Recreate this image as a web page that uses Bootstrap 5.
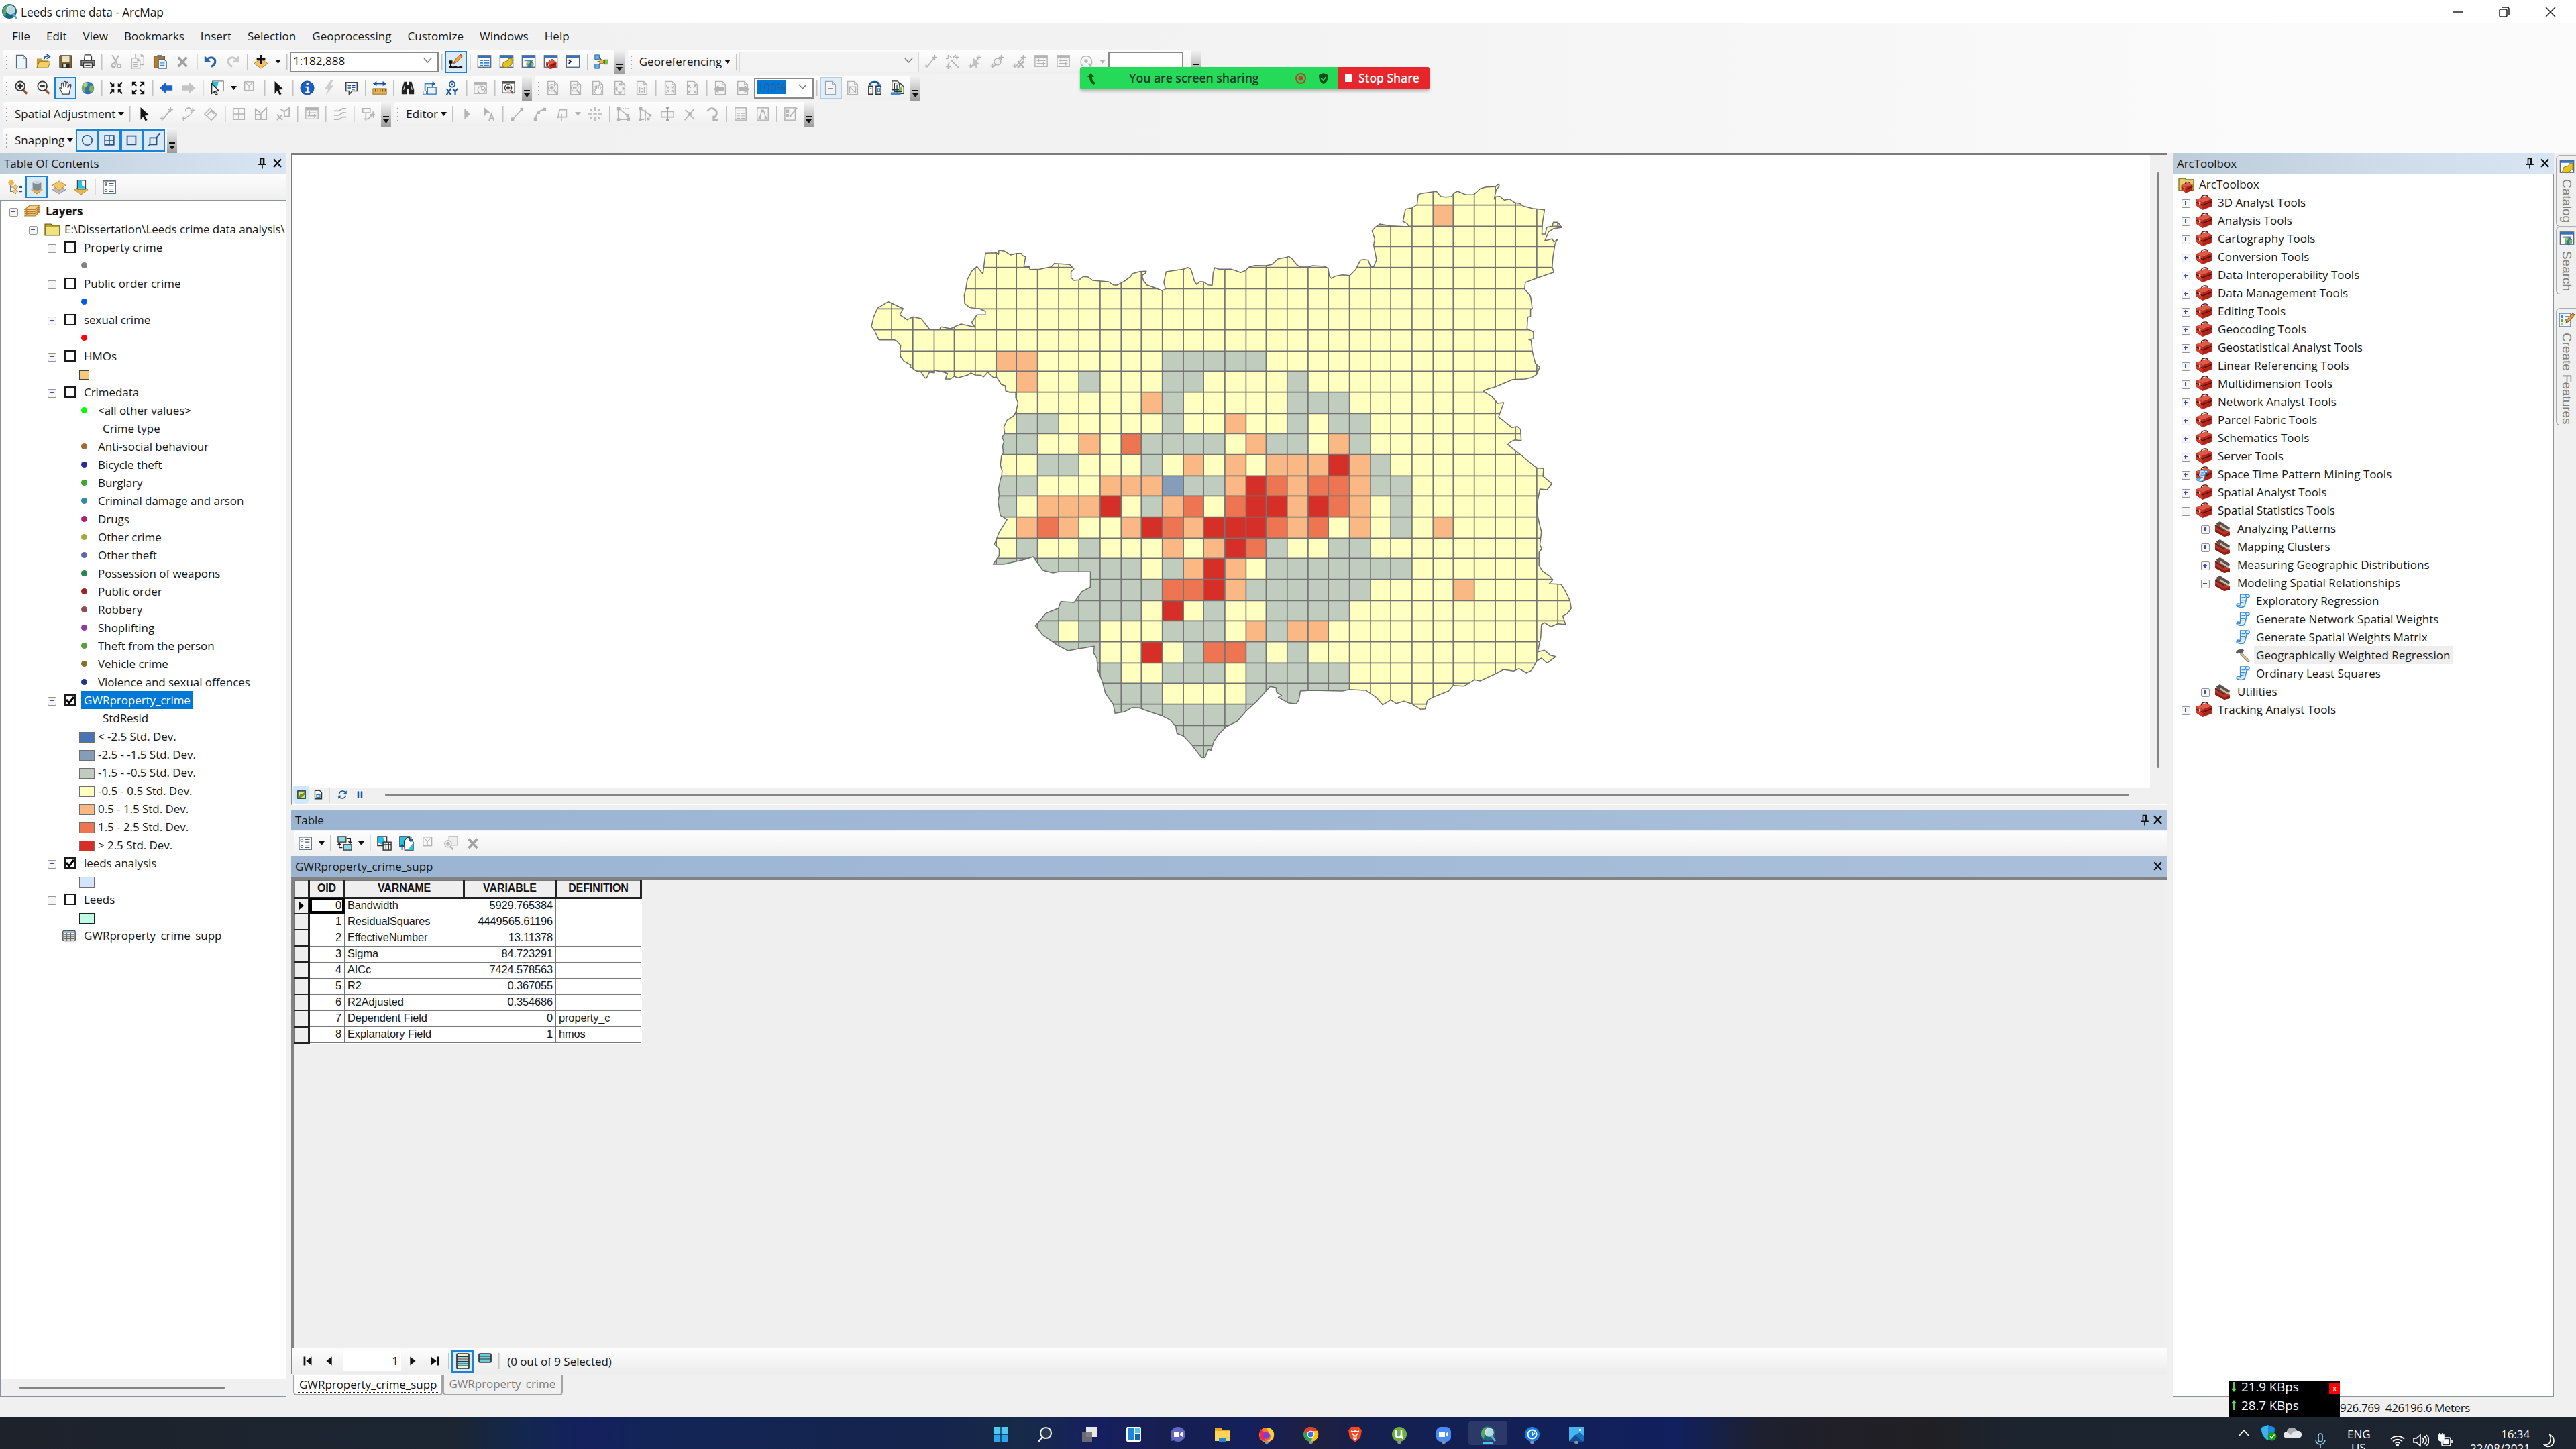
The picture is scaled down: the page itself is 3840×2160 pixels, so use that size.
<!DOCTYPE html>
<html lang="en">
<head>
<meta charset="utf-8">
<title>Leeds crime data - ArcMap</title>
<link href="https://cdn.jsdelivr.net/npm/bootstrap@5.3.0/dist/css/bootstrap.min.css" rel="stylesheet">
<style>
body{width:3840px;height:2160px;overflow:hidden;background:#f0f0f0;color:#141414;font:17px/27px "Open Sans","Noto Sans",sans-serif;letter-spacing:-.05px}
svg{display:block;flex:none}
.titlebar{height:35px;background:#fff;padding-left:2px}
.titlebar .caption{font-size:17.3px;margin:2px 0 0 5px}
.winbtns{width:187px;gap:47px}
.upper{background:linear-gradient(90deg,#f0f0f0 0,#f3f3f3 50%,#fbfbfb 90%);letter-spacing:.05px}
.menubar{height:37px;padding-left:18px;gap:24px}
.menubar span{display:block}
.bars{padding:2px 0 1px 5px;gap:3px;height:156px}
.barrow{height:36px;gap:5px}
.tbar{height:36px;background:linear-gradient(#fdfdfd,#f8f8f8 40%,#efefef);border-radius:3px 0 0 3px}
#tblbar{margin:1px 0 1px 4px}
.grip{width:10px;height:22px;background:radial-gradient(circle,#a9a9a9 1.3px,transparent 1.6px) 0 0/10px 6px}
.tbtn{width:33.1px;height:33px;display:flex;align-items:center;justify-content:center}
.tbtn.on{background:#dceaf7;border:2px solid #1883d7}
.tbtn.soft{background:#e3edf6;border:2px solid #b4cbe0}
.tsep{width:9px;height:24px;background:linear-gradient(#c3c3c3,#c3c3c3) 4px 0/1.5px 100% no-repeat}
.caret{width:17px;display:flex;justify-content:center}
.tlabel{padding:0 0 2px 7px;white-space:nowrap}
.combo{height:31px;border:2px solid #8a8a8a;background:#fff;padding:0 8px 3px 3px}
.combo.dim{border:1px solid #d9d9d9;background:#f3f3f3}
.combo .picked{background:#0078d7;color:#2c5f92;line-height:21px}
.more{width:15px;height:37px;align-self:flex-start;margin-left:3px;background:linear-gradient(#f4f4f4,#cfcfcf 45%,#9b9b9b);display:flex;align-items:flex-end;justify-content:center;padding-bottom:5px}
.workspace{height:1854px}
.pane-toc{width:427px}
.pane-mid{width:2796px;margin:0 9px 0 7px}
.pane-tools{width:568px}
.phead{height:31px;background:linear-gradient(90deg,#bccbd9,#cddbe8 50%,#d8e6f4);padding:0 3px 0 6px}
.phead.act{background:linear-gradient(90deg,#9ab4d2,#a4bbd7 60%,#aac0da)}
.phead.first{margin-top:7px}
.phead .xbtn{margin-left:3px}
.tocbar{height:39px;background:linear-gradient(#fdfdfd,#efefef);padding-left:5px}
.whitebox{background:#fff;border:1.5px solid #8c919c}
.hscroll{height:25px;background:#f0f0f0;padding-left:28px}
.hscroll div{width:306px;height:3px}
#toc{padding-top:2px}
#toolbox{padding-top:1px;letter-spacing:.03px}
.treerow{height:27px;white-space:nowrap}
.treerow>.slot{display:block;flex:none}
.tog{display:block;width:13px;height:13px;border:1.5px solid #959595;border-radius:2px;background:#f5f5f5;position:relative;margin-top:3px}
.tog::before{content:"";position:absolute;left:2px;top:4.2px;width:6px;height:1.6px;background:#3b4fa5}
.tog.plus::after{content:"";position:absolute;left:4.2px;top:2px;width:1.6px;height:6px;background:#3b4fa5}
.cbox{width:17px;height:17px;border:2px solid #1b1b1b;background:#fff}
.dot{width:9px;height:9px;border-radius:50%;margin-left:1px}
.patch{width:23px;height:16px;border:1.6px solid #6f6f6f;margin-top:2px}
.patch.sm{width:15px;height:14px;border-color:#444}
.patch.dk{border-color:#222}
.chosen{background:#0078d7;color:#fff;padding:0 3px 0 4px;margin-left:-4px;height:27px}
.hovered{background:#eee;padding:0 3px;margin-left:-3px}
.vline{background:#858585;border-radius:1px}
.vthumb{width:3px;height:888px;margin-top:26px}
.mapwin{height:946px;border-top:3px solid #7c7c7c;border-left:2.5px solid #7c7c7c}
.mapfoot{height:26px;border-left:2px solid #8b8b8b;border-bottom:1px solid #fff;padding:0 0 4px 1px}
.mapfoot .cur{width:24px;height:26px;background:#cde8ff}
.mapfoot .track{width:2600px;height:3px}
.grid-area{height:702px;border-top:5px solid #828282;border-left:5px solid #828282;background:#efefef}
.dtable{border-collapse:collapse;font:16.4px/20px "Liberation Sans",Arial,sans-serif;letter-spacing:-.1px;table-layout:fixed;width:516px;background:#fff}
.dtable td,.dtable th{height:24.07px;padding:0 4px 2px 4px;border:1.5px solid #777;white-space:nowrap;line-height:19px}
.dtable th{background:#efefef;height:25.5px;text-align:center;border-right:3px solid #222;border-bottom:3px solid #222;font-size:16px}
.dtable td:first-child{background:#efefef;border-right:3px solid #222;border-bottom:2.5px solid #222;padding:0}
.dtable td.cur{outline:4px solid #000;outline-offset:-4px}
.navbar2{height:39px;margin-bottom:2px;background:linear-gradient(#fdfdfd,#ececec);border-top:1px solid #ddd;border-left:2px solid #888;padding-left:12px}
.recno{width:87px;height:30px;margin-left:9px;padding-top:1px}
.sheets{padding-left:3px}
.sheet{height:30px;border:2px solid #a5a5a5;border-top:0;border-radius:0 0 5px 5px;line-height:22px;color:#7b7b7b;padding:2px 9px 2px 7px}
.sheet.open{background:#fff;color:#111;padding:2px 3px}
.sheet.open span{border:1.5px dotted #222;padding:0 3px;display:block}
.sidestrip{width:33px;padding:3px 0 0 3px}
.vtab{width:31px;border:1.5px solid #adadad;border-right:0;border-radius:6px 0 0 6px;background:#efefef;color:#808080;padding-top:5px;font:19px/22px "Liberation Sans",Arial,sans-serif}
.vtab span{writing-mode:vertical-rl;margin-top:7px}
.vt1{height:107px}.vt2{height:101px}.vt3{height:175px;margin-top:20px}
.status{height:30px;background:#f0f0f0;padding-left:3488px;line-height:34px;letter-spacing:-.42px}
.taskbar{height:48px;padding-left:1463px;background:linear-gradient(90deg,#1e222b 0,#1b2632 680px,#122750 780px,#14205f 880px,#122556 960px,#15244c 1400px,#172a48 1520px,#161f60 1640px,#171f50 1740px,#14205c 1860px,#1e2040 1960px,#142050 2050px,#11205e 2500px,#1d2030 2620px,#211f28 2740px,#202024 2880px,#1c2430 3000px,#1d2530 100%)}
.tile{width:58px;height:48px;margin-right:8px;position:relative;display:flex;align-items:center;justify-content:center;padding-top:3px}
.tile.cur::before{content:"";position:absolute;inset:7px 0 6px;background:rgba(255,255,255,.11);border-radius:4px}
.tile.run::after{content:"";position:absolute;bottom:8px;left:26px;width:6px;height:4px;border-radius:2px;background:#8f959f}
.tile.cur::after{content:"";position:absolute;bottom:7px;left:21px;width:16px;height:4px;border-radius:2px;background:#4cc2ff}
.tile svg{position:relative}
.share{position:absolute;left:1610px;top:100px;width:521px;height:33px;box-shadow:0 3px 4px rgba(0,0,0,.25);border-radius:3px;overflow:hidden;background:#25d959;font-weight:600;font-size:17.7px;color:#1e3a2c}
.share .msg{margin:0 53px 0 47px}
.share .stop{width:137px;background:#e8252b;color:#fff;font-size:17.5px}
.share .stop svg{margin:0 9px 0 11px}
.netspeed{position:absolute;left:3323px;top:2058px;width:165px;height:54px;background:#000;color:#fff;font-size:18.8px;padding-left:3px}
.netspeed .ln{height:18px;gap:7px}
.netspeed .ln+.ln{height:20px;margin-top:9px}
.netspeed .x{position:absolute;left:149px;top:4px;width:16px;height:16px;background:#f00;font:12px/15px "Open Sans",sans-serif;text-align:center}
.tray{position:absolute;left:3320px;top:2112px;width:520px;height:48px;overflow:hidden;color:#fff;font-size:17px}
.tray>*{position:absolute}
</style>
</head>
<body class="d-flex flex-column m-0">
<header class="titlebar d-flex align-items-center">
  <span data-i="arcmap" data-s="24"></span><span class="caption">Leeds crime data - ArcMap</span>
  <div class="winbtns d-flex align-items-center ms-auto">
    <svg width="22" height="22" viewBox="0 0 22 22" fill="none" stroke="#222" stroke-width="1.5"><path d="M4 11h14"/></svg>
    <svg width="22" height="22" viewBox="0 0 22 22" fill="none" stroke="#222" stroke-width="1.5"><rect x="4" y="7" width="11" height="11" rx="2"/><path d="M7 4h8a3 3 0 0 1 3 3v8"/></svg>
    <svg width="22" height="22" viewBox="0 0 22 22" fill="none" stroke="#222" stroke-width="1.5"><path d="M4 4l14 14M18 4L4 18"/></svg>
  </div>
</header>
<div class="upper">
  <nav class="menubar d-flex align-items-center"><span>File</span><span>Edit</span><span>View</span><span>Bookmarks</span><span>Insert</span><span>Selection</span><span>Geoprocessing</span><span>Customize</span><span>Windows</span><span>Help</span></nav>
  <div class="bars d-flex flex-column" id="bars"></div>
</div>
<main class="workspace d-flex">
  <aside class="pane-toc d-flex flex-column">
    <div class="phead d-flex align-items-center"><span>Table Of Contents</span><span class="ms-auto" data-i="pin" data-s="20"></span><span data-i="close" data-s="20" class="xbtn"></span></div>
    <div class="tocbar d-flex align-items-center" id="tocbar"></div>
    <div class="whitebox flex-grow-1 d-flex flex-column">
      <div id="toc" class="flex-grow-1 overflow-hidden"></div>
      <div class="hscroll d-flex align-items-center"><div class="vline"></div></div>
    </div>
  </aside>
  <section class="pane-mid d-flex flex-column">
    <div class="mapwin d-flex"><div class="bg-white"><svg id="map" width="2769" height="943" viewBox="436.5 231 2769 943"></svg></div>
      <div class="d-flex justify-content-center flex-grow-1"><div class="vline vthumb"></div></div></div>
    <div class="mapfoot d-flex align-items-center" id="mapfoot"></div>
    <div class="phead act first d-flex align-items-center"><span>Table</span><span class="ms-auto" data-i="pin" data-s="20"></span><span data-i="close" data-s="20"></span></div>
    <div class="tbar d-flex align-items-center" id="tblbar"></div>
    <div class="phead act d-flex align-items-center"><span>GWRproperty_crime_supp</span><span class="ms-auto" data-i="close" data-s="20"></span></div>
    <div class="grid-area">
      <table class="dtable"><colgroup><col style="width:21px"><col style="width:53px"><col style="width:178px"><col style="width:137px"><col style="width:127px"></colgroup>
      <thead><tr><th></th><th>OID</th><th>VARNAME</th><th>VARIABLE</th><th>DEFINITION</th></tr></thead><tbody id="rows"></tbody></table>
    </div>
    <div class="navbar2 d-flex align-items-center" id="recnav"></div>
    <div class="sheets d-flex"><div class="sheet open"><span>GWRproperty_crime_supp</span></div><div class="sheet">GWRproperty_crime</div></div>
  </section>
  <aside class="pane-tools d-flex flex-column">
    <div class="phead d-flex align-items-center"><span>ArcToolbox</span><span class="ms-auto" data-i="pin" data-s="20"></span><span data-i="close" data-s="20" class="xbtn"></span></div>
    <div class="whitebox flex-grow-1" id="toolbox"></div>
  </aside>
  <aside class="sidestrip">
    <div class="vtab vt1 d-flex flex-column align-items-center"><i data-i="catalog" data-s="23"></i><span>Catalog</span></div>
    <div class="vtab vt2 d-flex flex-column align-items-center"><i data-i="search" data-s="23"></i><span>Search</span></div>
    <div class="vtab vt3 d-flex flex-column align-items-center"><i data-i="create" data-s="24"></i><span>Create Features</span></div>
  </aside>
</main>
<div class="status">926.769&nbsp; 426196.6 Meters</div>
<footer class="taskbar d-flex" id="task"></footer>

<div class="share d-flex align-items-center">
  <svg class="ms-2" width="18" height="20" viewBox="0 0 18 20"><path d="M8 2l5 6h-3c0 4 1 6 5 8l-2 3C8 17 6 13 6 8H3z" fill="#075c14"/></svg>
  <span class="msg">You are screen sharing</span>
  <svg width="18" height="18" viewBox="0 0 18 18" fill="none" stroke="#b5432c" stroke-width="2"><circle cx="9" cy="9" r="7"/><circle cx="9" cy="9" r="2.5" fill="#b5432c"/></svg>
  <svg class="ms-3" width="18" height="18" viewBox="0 0 18 18"><path d="M9 1l7 3c0 7-2 11-7 13C4 15 2 11 2 4z" fill="#0b4f1c"/><path d="M5.500 9l3 3 4-5" fill="none" stroke="#25d959" stroke-width="1.800"/></svg>
  <div class="stop d-flex align-items-center h-100 ms-auto"><svg width="11" height="11"><rect width="11" height="11" fill="#fff"/></svg>Stop Share</div>
</div>
<div class="netspeed">
  <div class="ln d-flex align-items-center"><svg width="8" height="16" viewBox="0 0 8 16" fill="none" stroke="#5fe06d" stroke-width="1.800"><path d="M4 1v13M1 11l3 3.500 3-3.500"/></svg><span>21.9 KBps</span></div>
  <div class="ln d-flex align-items-center"><svg width="8" height="16" viewBox="0 0 8 16" fill="none" stroke="#5fe06d" stroke-width="1.800"><path d="M4 15V2M1 5l3-3.500 3 3.500"/></svg><span>28.7 KBps</span></div>
  <div class="x">x</div>
</div>
<div class="tray">
  <svg style="left:16px;top:18px" width="18" height="12" fill="none" stroke="#fff" stroke-width="1.600"><path d="M2 10l7-8 7 8"/></svg>
  <svg style="left:50px;top:12px" width="24" height="24" viewBox="0 0 24 24"><path d="M11 0l10 4c0 9-3 15-10 19C4 19 1 13 1 4z" fill="#1a8ae0"/><path d="M11 0v23C4 19 1 13 1 4z" fill="#3bb0f2"/><circle cx="17" cy="17" r="6.500" fill="#13a10e"/><path d="M14 17l2.500 2.500 4-5" fill="none" stroke="#fff" stroke-width="1.600"/></svg>
  <svg style="left:84px;top:15px" width="28" height="18" viewBox="0 0 28 18"><path d="M5 17a5 5 0 0 1 0-10A8 8 0 0 1 20 6a5.500 5.500 0 0 1 3 11z" fill="#e4e6ea"/><path d="M5 7a8 8 0 0 1 15-1c-5 0-8 4-9 6z" fill="#a9adb5"/></svg>
  <svg style="left:130px;top:24px" width="18" height="24" fill="none" stroke="#8fd3ee" stroke-width="1.600"><rect x="6" y="1" width="6" height="12" rx="3"/><path d="M2 10a7 7 0 0 0 14 0M9 17v6"/></svg>
  <span style="left:179px;top:12px">ENG</span><span style="left:185px;top:32px">US</span>
  <svg style="left:243px;top:26px" width="22" height="18" fill="none" stroke="#fff" stroke-width="1.700"><path d="M1 7a14 14 0 0 1 20 0M4 10.500a10 10 0 0 1 14 0M7.500 13.500a5 5 0 0 1 7 0"/><circle cx="11" cy="16" r="1.200" fill="#fff"/></svg>
  <svg style="left:277px;top:25px" width="24" height="20" fill="none" stroke="#fff" stroke-width="1.600"><path d="M1 7h4l6-5v16l-6-5H1zM14 6c2 2 2 6 0 8M17 4c4 3 4 9 0 12M20 2c5 4 5 12 0 16"/></svg>
  <svg style="left:313px;top:24px" width="24" height="22" fill="none" stroke="#fff" stroke-width="1.600"><rect x="7" y="7" width="13" height="12" rx="2"/><path d="M22 11v4"/><path d="M2 3h8v5a4 4 0 0 1-8 0zM4 0v3M8 0v3" fill="#fff"/><rect x="10" y="10" width="7" height="6" fill="#fff"/></svg>
  <span style="left:408px;top:12px">16:34</span><span style="left:362px;top:33px">22/08/2021</span>
  <svg style="left:471px;top:26px" width="20" height="20" fill="none" stroke="#fff" stroke-width="1.600"><path d="M10 1c8 3 8 14 0 17-3 1-6 0-8-2 8 1 11-8 8-15z"/></svg>
</div>
<script>
const G='#b4b4b4',B='#15559c';
const st=(c,d,w=1.8)=>`<path d="${d}" fill="none" stroke="${c}" stroke-width="${w}"/>`;
const fl=(c,d)=>`<path d="${d}" fill="${c}"/>`;
const win=(x='')=>`<rect x="1.500" y="2" width="21" height="19" fill="#fff" stroke="#58697a" stroke-width="1.500"/><path d="M1.500 2h21v4h-21z" fill="#3a72b8"/>${x}`;
const page=(c,x)=>`<path d="M4 1.500h11l5 5v16H4z" fill="#f4f4f4" stroke="${c}" stroke-width="1.600"/>${st(c,'M15 1.500v5h5',1.4)}${x}`;
const arrows4=(c,inw)=>inw?st(c,'M2 3l6 6M22 3l-6 6M2 21l6-6M22 21l-6-6',2)+fl(c,'M9 4v6H3zM15 4v6h6zM9 20v-6H3zM15 20v-6h6z'):st(c,'M4 4l5 5M20 4l-5 5M4 20l5-5M20 20l-5-5',2)+fl(c,'M2 2h7l-7 7zM22 2h-7l7 7zM2 22h7l-7-7zM22 22h-7l7-7z');
const mag=(c,s,x=10,y=9,f='#f2f2f2',h='#a0522d')=>`<path d="M${x+4} ${y+5}l7 7.500" stroke="${h}" stroke-width="3.600"/><circle cx="${x}" cy="${y}" r="7.500" fill="${f}" stroke="${c}" stroke-width="1.800"/>${st(c,s?`M${x-4} ${y}h8M${x} ${y-4}v8`:`M${x-4} ${y}h8`,2.6)}`;
const hand=(c)=>`<path d="M7 22c-1-4-5-7-5-10 1-1 3 0 4 2L5 5c0-2 2.500-2 3 0l1 6V3c0-2 3-2 3 0v8l1-7c0-2 3-2 3 0l-.5 8L18 7c.6-2 3-1 2.500 1l-2 9-1 5z" fill="#fff" stroke="${c}" stroke-width="1.500"/>`;
const link=(x='')=>st(G,'M6 21L18 6',2)+st(G,'M19 1v8M15 5h8M5 15v8M1 19h8',1.6)+x;
const box=x=>`<path d="M1 8l14-5 8 4v11l-13 5-9-6z" fill="#b42318"/><path d="M1 8l14-5 8 4-13 5z" fill="#de5b49"/><path d="M1 8l9 4v11l-9-6z" fill="#d03c2c"/>${st('#4a1712','M8 6c0-4 9-6 9-2M1 12l9 4 13-5',1.4)}${fl('#f0e6e0','M5 11l2 1v4l-2-1z')}${x||''}`;
const scroll='<path d="M8 2h11c4 0 4 5 0 5h-1l-3 12c-1 4-7 4-12 2-2-2 0-5 2-4h3z" fill="#d9efff" stroke="#3c8bd0" stroke-width="1.600"/>'+st('#3c8bd0','M10 7h6M9 11h6M8 15h5M18 2c-3 1-2 5 1 5M3 19c2 1 5 1 6-2',1.3);
const list='<rect x="2" y="2" width="20" height="20" fill="#fff" stroke="#65758c" stroke-width="1.800"/>'+st('#4a5a70','M11 6h8M11 10h8M11 15h8M11 19h8',1.3)+'<circle cx="6.500" cy="7" r="1.800" fill="none" stroke="#333" stroke-width="1.300"/><circle cx="6.500" cy="17" r="1.800" fill="none" stroke="#333" stroke-width="1.300"/>';
const globe='<circle cx="12" cy="12" r="10" fill="#2f6fc0"/><path d="M4 6c3-4 8-4 9-2l-2 5-4 3 1 4-2 3C2 15 1 10 4 6zM15 8l6 1c1 4 0 8-4 11l-3-5z" fill="#7fb742"/><circle cx="8" cy="7" r="3" fill="#fff" opacity=".35"/>';
const I={
arcmap:'<circle cx="12" cy="11" r="11" fill="#16697a"/><path d="M4 5c4-5 9-4 11-2l-3 6-5 4-1 6C1 15 1 9 4 5z" fill="#5aa469"/><circle cx="14" cy="9" r="6" fill="#cfe9f5" opacity=".85" stroke="#e9f3f7" stroke-width="1.500"/><path d="M17 14l6 8" stroke="#6aa5d8" stroke-width="3"/>',
pin:st('#111','M8 3h8M9 3v10M15 3v10M14 3v10M5 13.500h14M12 14v7',2),
close:st('#111','M5 4l13 14M18 4L5 18',2.8),
new:'<path d="M4 1.500h11l5 5v16H4z" fill="#eef6fd" stroke="#5a6a7c" stroke-width="1.600"/>'+st('#5a6a7c','M15 1.500v5h5',1.4),
open:'<path d="M1 7h8l2 3h9v12H1z" fill="#c79a35"/><path d="M5 12h18l-4 10H1z" fill="#f3cf6b" stroke="#8b6914"/>'+st(B,'M13 8c0-5 3-5 6-5M17 0l5 3.500L17 7',2),
save:'<rect x="2" y="2" width="20" height="20" rx="1" fill="#7a6432" stroke="#3a3223"/><rect x="6" y="3" width="12" height="9" fill="#e9e2c8"/><rect x="6" y="15" width="12" height="7" fill="#2b2a27"/><rect x="8" y="16" width="4" height="5" fill="#ddd"/>',
print:'<path d="M7 1h9l2 2v7H6z" fill="#fff" stroke="#333" stroke-width="1.400"/><path d="M1 10h22v8H1z" fill="#8c8c8c" stroke="#333" stroke-width="1.400"/><path d="M5 14h14v8H5z" fill="#fff" stroke="#333" stroke-width="1.400"/>'+st('#333','M8 18h8',1.5),
cut:st(G,'M6 1l8 15M16 2L9 15',2.4)+`<circle cx="8" cy="18" r="3" fill="none" stroke="${G}" stroke-width="2"/><circle cx="17" cy="19" r="3" fill="none" stroke="${G}" stroke-width="2"/>`,
copy:`<g transform="translate(4 -2) scale(.85)">${page(G,'')}</g><g transform="translate(-2 5) scale(.85)">${page(G,st(G,'M7 10h9M7 14h9M7 18h9',1.3))}</g>`,
paste:'<rect x="2" y="3" width="17" height="19" fill="#b87a2d" stroke="#6f4310"/><rect x="7" y="1" width="7" height="4" fill="#777"/><path d="M9 8h9l4 4v11H9z" fill="#eef6fd" stroke="#4f6e93" stroke-width="1.400"/>'+st('#4c83c0','M11 14h8M11 18h8',1.4),
del:st('#a2a2a2','M5 5l14 15M19 5L5 20',4),
undo:st('#2a64a8','M6 8c8-6 15-1 13 6-1 3-3 5-6 6',3.4)+fl('#2a64a8','M2 2v11h11z'),
redo:st('#cacaca','M18 8c-8-6-15-1-13 6 1 3 3 5 6 6',3.4)+fl('#cacaca','M22 2v11H11z'),
add:'<path d="M12 7l11 8-11 8L1 15z" fill="#f4c46a" stroke="#b5822a"/>'+st('#111','M12 1v15M5 8h14',4),
draw:st('#111','M3 12v9h18',1.6)+fl('#111','M1 10h5v5H1zM1 19h5v4H1zM8 19h5v4H8zM17 19h5v4h-5z')+'<path d="M8 15l3-7 8-8 3 3-8 9z" fill="#f0a43a" stroke="#7a4a10"/><path d="M18 1l3-1 2 3-2 2z" fill="#d9534f"/>',
toc:win(st('#3a85d8','M5 10h5M5 14h5M5 18h5M12 10h8M12 14h8M12 18h8',1.8)),
catalog:win('<path d="M7 13l8-3v-3h6v9l-9 6-7-2z" fill="#e5c320" stroke="#8b7410"/>'),
search:win(st('#6a8ab0','M5 10h14',2.4)+'<g transform="translate(7 9) scale(.6)">'+globe+'</g>'),
tools:win('<g transform="translate(4 7) scale(.75)">'+box()+'</g>'),
python:win(st('#111','M5 9l4 3-4 3',1.8)),
model:st('#444','M6 5h4l3 7H6M13 12l4 0M6 19l6-6',1.6)+'<rect x="2" y="1" width="7" height="7" fill="#61b5f0" stroke="#215e94"/><rect x="2" y="16" width="7" height="7" fill="#61b5f0" stroke="#215e94"/><circle cx="13" cy="12" r="3.500" fill="#f4b042" stroke="#9a650b"/><rect x="18" y="9" width="6" height="7" fill="#77c34a" stroke="#34761a"/>',
zin:mag('#333',1),zout:mag('#333',0),hand:hand('#444'),globe,
fin:arrows4('#111',1),fout:arrows4('#111',0),
back:fl('#1d63c4','M1 12l10-9v5h11v8H11v5z'),fwd:fl('#c3c3c3','M23 12L13 3v5H2v8h11v5z'),
selfeat:'<rect x="5" y="1" width="18" height="16" fill="#fff" stroke="#556"/><path d="M6 2h9l-2 8-7 6z" fill="#1fc4e6"/><path d="M4 5l11 11-5 1 3 5-3 1-2-5-4 3z" fill="#fff" stroke="#222" stroke-width="1.400"/>',
clear:`<rect x="3" y="2" width="14" height="14" fill="#fafafa" stroke="${G}" stroke-width="1.600"/>`+st(G,'M5 4l5 5 5-5M10 9v6',1.3),
ptr:fl('#151515','M6 1l14 13-7 .8 4 7-3 1.700-4-7-4 5z'),
ident:'<circle cx="12" cy="12" r="11" fill="#1d5fc0" stroke="#123f85"/>'+fl('#fff','M10.500 4h3.500v3.500h-3.500zM9 9.500h5V18h2v2H9v-2h2v-6.500H9z'),
bolt:fl('#cdcdcd','M14 0L4 14h6l-4 10L19 8h-6l5-8z'),
popup:'<path d="M3 3h18v14h-8l-5 6v-6H3z" fill="#fff" stroke="#444" stroke-width="1.600"/>'+st(B,'M6 8h5M6 12h5M13 8h5M13 11h5M13 14h4',1.8),
ruler:st(B,'M3 5h18',2)+fl(B,'M1 5l6-4v8zM23 5l-6-4v8z')+'<rect x="1" y="13" width="22" height="9" fill="#e3b45c" stroke="#9a6a1d"/>'+st('#7a5314','M5 14v4M9 14v4M13 14v4M17 14v4M21 14v4',1.2),
binoc:fl('#222','M6 2h4v5h4V2h4l4 13v7h-8v-8h-4v8H2v-7z')+st('#ccc','M7 8l-2 7M17 8l2 7',1.4),
route:st('#3a85c8','M4 19V5h12v6',2)+fl(B,'M16 1l5 4-5 4z')+'<rect x="8" y="11" width="14" height="11" fill="#e8f2fb" stroke="#3a75b0" stroke-width="1.400"/><rect x="1" y="17" width="5" height="5" fill="#fff" stroke="#3a75b0"/>',
xy:'<circle cx="12" cy="6" r="4.500" fill="none" stroke="#15559c" stroke-width="1.800"/><circle cx="12" cy="6" r="1.500" fill="#15559c"/>'+st(B,'M3 13l7 10M10 13L3 23M13 13l4 5 4-5M17 18v5',2.2),
time:`<rect x="2" y="3" width="20" height="18" fill="#f2f2f2" stroke="${G}" stroke-width="1.500"/><path d="M2 3h20v4H2z" fill="${G}"/><circle cx="14" cy="15" r="6" fill="#f5f5f5" stroke="${G}" stroke-width="1.500"/>`+st(G,'M14 11v4h4',1.4),
viewer:'<rect x="2" y="2" width="20" height="18" fill="#fff" stroke="#444" stroke-width="1.600"/><path d="M2 2h20v3H2z" fill="#555"/><g transform="translate(4 5) scale(.75)">'+mag('#333',1)+'</g>',
lzin:page(G,'<g transform="translate(3 5) scale(.75)">'+mag(G,1,10,9,'#eee',G)+'</g>'),lzout:page(G,'<g transform="translate(3 5) scale(.75)">'+mag(G,0,10,9,'#eee',G)+'</g>'),
lhand:page(G,'<g transform="translate(4 6) scale(.75)">'+hand(G)+'</g>'),
lfull:page(G,fl(G,'M12 4l4 4H8zM12 22l4-4H8zM4 13l4-4v8zM20 13l-4-4v8z')),
l11:page(G,st(G,'M8 10v10M16 10v10M12 12v2M12 17v2',2)),
lin:page(G,'<g transform="translate(4 6) scale(.66)">'+arrows4(G,1)+'</g>'),lout:page(G,'<g transform="translate(4 6) scale(.66)">'+arrows4(G,0)+'</g>'),
lback:page(G,fl(G,'M1 14l8-7v4h9v6H9v4z')),lfwd:page(G,fl(G,'M23 14l-8-7v4H6v6h9v4z')),
draft:page('#9aa7b4',st('#8a97a4','M8 13h8',2)),focus:page(G,st(G,'M7 10h10v10H7zM7 10l10 10',1.4)),
change:'<path d="M2 9h7v13H2zM14 9h8v13h-8z" fill="#fff" stroke="#333" stroke-width="1.600"/>'+st(B,'M4 7c1-6 13-6 15-1',3)+fl(B,'M15 6h8l-4 5z')+st('#3a85c8','M4 13h3M4 17h3M17 13h3v5h-3z',1.4),
ddp:'<path d="M3 1h9l3 3v11H3zM7 4h9l3 3v11H7zM11 7h8l3 3v11H11z" fill="#fff" stroke="#333" stroke-width="1.400"/><rect x="14" y="11" width="5" height="6" fill="#77b94a"/><rect x="1" y="19" width="16" height="4" fill="#3c8bd0"/>',
link:link(),link2:st(G,'M7 20C8 14 18 16 17 8M4 16v7M1 19h7M19 2v8M15 6h8M8 8c-3-6 6-8 8-3',1.7),link3:st(G,'M2 12l9-9 11 10-9 9zM6 14l7-7 5 5',1.7),
g1:link(fl('#c6c6c6','M10 8l6-5 6 6-6 5z')),g2:link(fl('#c2c2c2','M10 6l10 10-5 1 2 5-3 1-2-5-3 3z')),g3:link('<circle cx="13" cy="12" r="5.500" fill="#eee" stroke="#b4b4b4" stroke-width="1.700"/>'),g4:link(st(G,'M10 11l10 11M20 11L10 22',3)),
gw:`<rect x="2" y="2" width="20" height="18" fill="#f5f5f5" stroke="${G}" stroke-width="1.500"/><path d="M2 2h20v4H2z" fill="${G}"/>`+st(G,'M5 10h14M5 15h14M8 7v6M16 12v6',1.6),
rot:st(G,'M17 20c8-6 4-17-5-17C2 3 1 16 8 20M12 8v6M9 11h6',1.7)+fl(G,'M14 15h7v7z'),
wand:st(G,'M9 9l13 13M5 1v5M1 7h4M13 5l4-4M6 12v4M10 6l-2-3M1 20h8M5 16v8M19 2v6M16 5h7',2),
tgrid:st(G,'M3 3h18v18H3zM12 3v18M3 12h18',1.8),tpoly:st(G,'M3 4l9 7 9-9v19H3zM3 13h9M12 11v10',1.8),tpolyx:st(G,'M8 4l6 4 8-6v14h-8M14 8v8M2 13l9 9M11 13l-9 9',2),
lines:st(G,'M2 7h8l6-4h6M2 14h8l6-4h6M2 21h8l6-4h6',1.8),ptree:st(G,'M3 3h12v7H3zM8 10v13M5 20h7l8-9M20 8v10M15 13h8',1.8),
edarrow:fl(G,'M8 3l9 9-9 9z'),edta:fl(G,'M4 1l11 10H8l-4 5z')+st(G,'M12 23l4-11 4 11M13 19h6',2),
seg:st(G,'M4 21L20 4',1.8)+fl(G,'M2 18h5v5H2zM17 2h5v5h-5z'),arc:st(G,'M6 21C6 10 12 6 20 5',1.8)+fl(G,'M3 18h5v5H3zM9 8h4v4H9zM18 2h5v5h-5z'),
trace:st(G,'M6 19L9 5h11v12H6M12 12v11M7 17h10',1.8),burst:st(G,'M12 1v6M12 17v6M1 12h6M17 12h6M4 4l4 4M20 4l-4 4M4 20l4-4M20 20l-4-4M9 12h6',1.8),
vtx:st(G,'M4 3v18h17v-5L6 4',1.8)+fl(G,'M2 1h5v5H2zM2 19h5v5H2zM18 18h5v5h-5zM17 12h5v5h-5z')+`<path d="M7 3h14v9" fill="none" stroke="${G}" stroke-dasharray="2 2"/>`,
vtx2:st(G,'M4 3v18h6M4 3l15 10M12 5v18',1.8)+fl(G,'M2 1h5v5H2zM18 12h4v4h-4zM2 19h4v4H2zM15 18h4v4h-4z'),
split:st(G,'M2 8h20v9H2z',1.8)+st('#9a9a9a','M12 1v22',2)+fl('#9a9a9a','M10 0h4v4h-4zM10 20h4v4h-4z'),inter:st(G,'M4 22L20 3M5 5l4 4M14 15l6 6',1.8)+fl(G,'M10 9h5v6h-5z'),
rot2:st(G,'M5 8c3-8 15-6 15 3 0 4-3 6-5 8M15 15v7h7',3),
attr:`<rect x="3" y="2" width="18" height="20" fill="#f7f7f7" stroke="${G}" stroke-width="1.600"/>`+st(G,'M5 7h6M13 7h6M5 11h6M13 11h6M5 15h6M13 15h6M5 19h6M13 19h6',1.3),
sketch:`<rect x="3" y="2" width="18" height="20" fill="#f7f7f7" stroke="${G}" stroke-width="1.600"/>`+st(G,'M7 18l3-10h4l3 10',1.600)+fl(G,'M9 5h5v4H9zM5 16h4v4H5zM15 16h4v4h-4z'),
feat:`<rect x="2" y="2" width="17" height="20" fill="#f7f7f7" stroke="${G}" stroke-width="1.600"/>`+st(G,'M5 6h3v3H5zM5 13h3v3H5zM22 2L12 14l-1 3',2),
s1:'<circle cx="12" cy="12" r="8" fill="none" stroke="#26507e" stroke-width="1.700"/>',s2:st('#26507e','M4.500 4.500h15v15h-15zM12 4.500v15M4.500 12h15',1.7),s3:st('#26507e','M5 5h14v14H5z',1.900),s4:st('#26507e','M6 8h11v11H6zM2 22l4-3M17 8c1-3 2-5 5-6',1.8),
layers:['M3 17l7-6h14l-6 6z','M3 14l7-6h14l-6 6z','M3 11l7-6h14l-6 6z','M3 8l7-6h14l-6 6z'].map(d=>`<path d="${d}" transform="translate(-2 2)" fill="#f5cf8f" stroke="#b9802f" stroke-width="1.200"/>`).join(''),
folder:'<path d="M1 4h9l2 2h11v15H1z" fill="#b9a137" stroke="#6d5d14" stroke-width="1.200"/><path d="M2 9h20v11H2z" fill="#f1e27e"/>',
table:'<rect x="1" y="3" width="22" height="18" rx="2" fill="#fff" stroke="#555" stroke-width="1.800"/><path d="M2 4h20v3H2z" fill="#7fa9cf"/>'+st('#666','M2 10.500h20M2 14h20M2 17.500h20M8 7v14M15 7v14',1.3),
toolroot:'<path d="M1 3h9l2 2h11v16H1z" fill="#e2cf6a" stroke="#7d6a18" stroke-width="1.300"/><g transform="translate(4 7) scale(.76)">'+box()+'</g>',
box:box(),boxs:box('<g transform="translate(0 5) scale(.78)">'+scroll+'</g>'),
toolset:'<path d="M1 8l3-2 18 11v5l-8 2L1 14z" fill="#bb3326"/><path d="M1 13l13 8 8-3v4l-8 2L1 17z" fill="#8d1e14"/><path d="M2 5l6-3 14 9-1 4-5 1z" fill="#5b524c"/>'+st('#c9bca9','M8 8l13 8',2.4)+st('#3a302b','M1 8l13 8',1.600),
scroll,hammer:'<path d="M10 8l12 12-2 3L8 11z" fill="#d8c49e" stroke="#8b7a58"/><path d="M1 8c1-4 6-6 11-5l2 2-5 6-3-3-3 2z" fill="#5a5f63"/>',
t1:fl('#f0b44e','M1 5l3-4h5l2 4-2 4H4z')+st('#777','M5 9v10h5M5 12h8',1.3)+'<path d="M13 8l4 4-4 3-4-3zM13 15l4 4-4 4-4-4z" fill="#f6cd80" stroke="#c58a2c"/>'+st(B,'M19 12h5M19 19h5',2),
t2:'<path d="M12 10l9 6-9 7-9-7z" fill="#f0b64e" stroke="#b5822a"/><path d="M5 4h14v11c-3 3-11 3-14 0z" fill="#7f8b98"/><ellipse cx="12" cy="4" rx="7" ry="2.500" fill="#cfd6dd"/>',
t3:'<path d="M12 9l11 7-11 7-11-7z" fill="#bdbdbd" stroke="#8e8e8e"/><path d="M12 2l11 7-11 8L1 9z" fill="#f6c569" stroke="#b5822a"/>',
t4:'<path d="M12 9l11 7-11 8L1 16z" fill="#f0b64e" stroke="#b5822a"/><rect x="6" y="1" width="13" height="14" fill="#fff" stroke="#444" stroke-width="1.500"/><path d="M7 2h6v7l5 3v2H7z" fill="#1fc4e6"/>',list,
mapv:'<rect x="3" y="3" width="18" height="18" fill="#d9e27a" stroke="#333" stroke-width="2.400"/>'+fl('#5a9a3a','M5 19l4-9 6 0 4-5v7l-8 7z'),layv:'<path d="M4 2h11l5 5v15H4z" fill="#fff" stroke="#333" stroke-width="2.200"/>'+st('#3a75b0','M8 12h8v6H8z',2),
refresh:st(B,'M4 10c2-8 12-9 16-3M20 14c-2 8-12 9-16 3',2.600)+fl(B,'M22 2v8h-8zM2 22v-8h8z'),pause:fl(B,'M6 4h4v16H6zM14 4h4v16h-4z'),
rel:'<rect x="1" y="1" width="13" height="9" fill="#8edbe6" stroke="#333" stroke-width="1.400"/><rect x="10" y="14" width="13" height="9" fill="#8edbe6" stroke="#333" stroke-width="1.400"/>'+st('#222','M16 4h5v7M18 9l3 3 3-3M8 19H3v-6M0 15l3-3 3 3',1.700),
selattr:'<rect x="1" y="1" width="15" height="15" fill="#fff" stroke="#333" stroke-width="1.400"/><path d="M2 2h8l4 9-4 4-8-4z" fill="#1fc4e6"/><rect x="10" y="10" width="13" height="13" fill="#eee" stroke="#333" stroke-width="1.500"/>'+st('#333','M10 14h13M10 18h13M14.500 12v11M19 12v11',1.200),
switch:'<rect x="1" y="1" width="16" height="16" fill="#1fc4e6" stroke="#333" stroke-width="1.400"/><path d="M8 8l6-6 9 8v13H9z" fill="#fff" stroke="#333" stroke-width="1.300"/><path d="M14 23l9-12v12z" fill="#1fc4e6"/>'+st(B,'M19 1v7M16 5l3 4 3-4M5 23v-8M2 18l3-4 3 4',2),
zsel:`<rect x="9" y="1" width="14" height="14" fill="#eee" stroke="${G}" stroke-width="1.500"/><g transform="translate(0 6) scale(.75)">`+mag(G,1,10,9,'#eee',G)+'</g>',
tfull:'<rect x="3" y="1" width="18" height="22" rx="1.500" fill="#8edbe6" stroke="#333" stroke-width="1.700"/>'+fl('#f5f0d8','M4 2h16v3H4zM4 8h16v3H4zM4 19h16v3H4z')+st('#333','M3 5.500h18M3 9h18M3 12.500h18M3 16h18M3 19h18',1.200),
tsel:'<rect x="3" y="1" width="18" height="13" rx="1.500" fill="#6fcbd9" stroke="#333" stroke-width="1.700"/>'+st('#333','M3 5h18M3 9h18',1.200),
create:'<rect x="1" y="2" width="17" height="20" fill="#eef6fd" stroke="#4f7ba8" stroke-width="1.400"/>'+fl('#3a85c8','M3 5h4v4H3z')+fl('#5aa640','M3 11h4v4H3z')+fl('#d9b52a','M3 17h4v3H3z')+st('#666','M9 7h7M9 12h4',1.400)+'<path d="M11 16l2-5 8-9 3 2-8 10z" fill="#f0a43a" stroke="#7a4a10"/>',
first:fl('#111','M5 5h3v14H5zM18 5v14l-9-7z'),prev:fl('#111','M16 5v14l-9-7z'),next:fl('#111','M8 5v14l9-7z'),last:fl('#111','M16 5h3v14h-3zM6 5v14l9-7z'),
win:fl('#4cc9f5','M1 1h10.300v10.300H1zM12.700 1H23v10.300H12.700z')+fl('#2ba5ec','M1 12.700h10.300V23H1zM12.700 12.700H23V23H12.700z'),
tsearch:'<circle cx="13" cy="10" r="8" fill="#2b3a4e" stroke="#eee" stroke-width="2.200"/>'+st('#eee','M8 16l-6 7',2.600),
tview:fl('#e8e8ea','M7 1h16v15H7z')+'<rect x="1" y="9" width="15" height="14" fill="#707278" opacity=".9"/>',
widgets:'<rect x="1" y="1" width="22" height="22" rx="2" fill="#fff"/>'+fl('#1f87d8','M3 3h9v18H3z')+fl('#57c3f2','M14 3h7v7h-7z')+fl('#1665b0','M14 12h7v9h-7z'),
chat:'<circle cx="12" cy="12" r="11" fill="#6467c2"/><path d="M2 22l1-8 6 6z" fill="#6467c2"/>'+fl('#fff','M6 8h8v8H6zM15 11l4-3v8l-4-3z'),
explorer:'<path d="M1 2h9l2 3h11v17H1z" fill="#f0a91c"/><path d="M1 7h22v15H1z" fill="#ffd35c"/><path d="M7 17h11v6H7z" fill="#2a86cf"/>',
firefox:'<circle cx="12" cy="13" r="11" fill="#ff7a2b"/><path d="M12 2c7 0 12 5 11 12s-8 11-14 8c10 1 12-8 6-13z" fill="#ffd23d"/><path d="M3 4l4 4 5 0-3 5c-3 5 2 9 6 6-5 6-14 1-13-6z" fill="#f0284f"/><circle cx="12" cy="14" r="5" fill="#7542d8"/>',
chrome:'<circle cx="12" cy="12" r="11" fill="#32a350"/><path d="M12 1a11 11 0 0 1 10 6H12L6 13 2.500 6A11 11 0 0 1 12 1z" fill="#e33b2e"/><path d="M22 7a11 11 0 0 1-10.500 16L17 13l-1-6z" fill="#fbc116"/><circle cx="12" cy="12" r="5.500" fill="#fff"/><circle cx="12" cy="12" r="4.200" fill="#3878e0"/>',
brave:'<path d="M6 1h12l4 5-2 11-8 7-8-7L2 6z" fill="#f4471f"/>'+st('#fff','M6 7l3 1 3-1 3 1 3-1M8 11l3 3-1 4 2 2 2-2-1-4 3-3',1.800),
utor:'<circle cx="12" cy="12" r="11" fill="#6eae45"/>'+st('#fff','M7 6v7c0 5 7 5 8 0V6M15 12c0 4 1 6 3 6',2.600),
zoom:'<rect x="1" y="1" width="22" height="22" rx="7" fill="#4a8cf7"/>'+fl('#fff','M5 8h9v8H5zM15 11l4-3v8l-4-3z'),
timer:'<circle cx="12" cy="12" r="11" fill="#1b7fdc"/><circle cx="12" cy="12" r="6.500" fill="none" stroke="#fff" stroke-width="2"/>'+st('#fff','M12 8v5l4-3',1.900),
photos:'<rect x="1" y="1" width="22" height="22" rx="2" fill="#1a6fc0"/><path d="M1 1h22v13l-6-5-7 4-9 9z" fill="#45b4f0"/><path d="M1 23l9-10 12 10z" fill="#104e94"/><rect x="16" y="4" width="3" height="3" fill="#fff"/>'
};
const svg=(n,s=24)=>`<svg width="${s}" height="${s}" viewBox="0 0 24 24">${I[n]||''}</svg>`;
const car=(c='#111')=>`<span class="caret"><svg width="9" height="6"><path d="M0 0h9L4.500 6z" fill="${c}"/></svg></span>`;
const more='<div class="more"><svg width="9" height="11"><path d="M0 0h9v2H0zM0 5h9L4.500 11z" fill="#111"/></svg></div>';
const chev='<svg class="ms-auto" width="13" height="9" fill="none" stroke="#777" stroke-width="1.500"><path d="M1 1l5.500 6L12 1"/></svg>';
// Toolbar tokens: | separator, v caret, * framed button, ~ softly framed button, = label, # raw markup
const tool=t=>t==='|'?'<i class="tsep"></i>':t==='v'?car():t==='V'?car(G):t[0]==='='?`<span class="tlabel">${t.slice(1)}</span>`:t[0]==='#'?t.slice(1):t[0]==='*'?`<i class="tbtn on">${svg(t.slice(1),22)}</i>`:t[0]==='~'?`<i class="tbtn soft">${svg(t.slice(1),22)}</i>`:`<i class="tbtn">${svg(t,22)}</i>`;
const bar=a=>`<div class="tbar d-flex align-items-center"><i class="grip"></i>${a.map(tool).join('')}${more}</div>`;
const cb=(w,t,c='')=>`#<div class="combo ${c} d-flex align-items-center" style="width:${w}px">${t}${chev}</div>`;
const bars=[
 [['new','open','save','print','|','cut','copy','paste','del','|','undo','redo','|','add','v','|',cb(222,'1:182,888'),'|','*draw','|','toc','catalog','search','tools','python','|','model'],
  ['=Georeferencing','v','|',cb(268,'','dim'),'link','wand','g2','g3','g4','gw','gw','rot','V','#<div class="combo me-2" style="width:112px"></div>']],
 [['zin','zout','*hand','globe','|','fin','fout','|','back','fwd','|','selfeat','v','clear','|','ptr','|','ident','bolt','popup','|','ruler','|','binoc','route','xy','|','time','|','viewer'],
  ['lzin','lzout','lhand','lfull','l11','|','lin','lout','|','lback','lfwd',cb(89,'<span class="picked">100%</span>'),'|','~draft','focus','change','ddp']],
 [['=Spatial Adjustment','v','|','ptr','link','link2','link3','|','tgrid','tpoly','tpolyx','|','gw','|','lines','|','ptree'],
  ['=Editor','v','|','edarrow','edta','|','seg','arc','trace','V','burst','|','vtx','vtx2','split','inter','rot2','|','attr','sketch','|','feat']],
 [['=Snapping','v','*s1','*s2','*s3','*s4']]];
const $=i=>document.getElementById(i);
$('bars').innerHTML=bars.map(r=>`<div class="barrow d-flex">${r.map(bar).join('')}</div>`).join('');
$('tocbar').innerHTML=['t1','*t2','t3','t4','|','list'].map(tool).join('');
$('tblbar').innerHTML=['list','v','|','rel','v','|','selattr','switch','clear','zsel','del'].map(tool).join('');
$('mapfoot').innerHTML=`<i class="cur d-flex justify-content-center align-items-center rounded-bottom">${svg('mapv',15)}</i><i style="margin:0 4px 0 6px">${svg('layv',15)}</i><i class="tsep"></i><i class="ms-2">${svg('refresh',15)}</i><i style="margin:0 30px 0 11px">${svg('pause',15)}</i><i class="vline track"></i>`;
$('recnav').innerHTML=`<i>${svg('first',22)}</i><i style="margin-left:10px">${svg('prev',22)}</i><span class="recno bg-white text-end pe-1">1</span><i style="margin-left:6px">${svg('next',22)}</i><i style="margin:0 5px 0 11px">${svg('last',22)}</i><i class="tsep"></i><i class="tbtn on">${svg('tfull',24)}</i><i class="tbtn">${svg('tsel',24)}</i><i class="tsep"></i><span class="ms-1 ps-1">(0 out of 9 Selected)</span>`;
document.querySelectorAll('[data-i]').forEach(e=>e.innerHTML=svg(e.dataset.i,+e.dataset.s));

// Table of contents
const R=(pl,h)=>`<div class="treerow d-flex align-items-center" style="padding-left:${pl}px">${h}</div>`;
const cell=(w,h)=>`<span class="slot" style="width:${w}px">${h}</span>`;
const tog=p=>`<i class="tog ${p||''}"></i>`;
const lyr=(n,on,c)=>R(70,cell(25,tog())+cell(29,`<div class="cbox">${on?'<svg width="13" height="13"><path d="M1 6l4 5 7-9" fill="none" stroke="#000" stroke-width="3"/></svg>':''}</div>`)+`<span class="${c||''}">${n}</span>`);
const dot=(c,n='')=>R(119,cell(26,`<div class="dot" style="background:${c}"></div>`)+n);
const pat=(c,n='',x='')=>R(117,cell(28,`<div class="patch ${x}" style="background:${c}"></div>`)+n);
$('toc').innerHTML=[R(13,cell(22,tog())+cell(32,svg('layers',25))+'<b>Layers</b>'),R(42,cell(23,tog())+cell(30,svg('folder',24))+'E:\\Dissertation\\Leeds crime data analysis\\'),
lyr('Property crime'),dot('#828282'),lyr('Public order crime'),dot('#005ce6'),lyr('sexual crime'),dot('#f00'),lyr('HMOs'),pat('#f5ca7a','','sm'),
lyr('Crimedata'),dot('#0f0','&lt;all other values&gt;'),R(152,'Crime type'),
...[['#a0693c','Anti-social behaviour'],['#2a2aa3','Bicycle theft'],['#38a830','Burglary'],['#2f8ca3','Criminal damage and arson'],['#a8247c','Drugs'],['#a3a838','Other crime'],['#5c66b5','Other theft'],['#258750','Possession of weapons'],['#9e2420','Public order'],['#8f4a5c','Robbery'],['#8c3ca3','Shoplifting'],['#5c9e38','Theft from the person'],['#857029','Vehicle crime'],['#1f3585','Violence and sexual offences']].map(a=>dot(...a)),
lyr('GWRproperty_crime',1,'chosen'),R(152,'StdResid'),
...[['#4575b5','&lt; -2.5 Std. Dev.'],['#849eba','-2.5 - -1.5 Std. Dev.'],['#c0ccbe','-1.5 - -0.5 Std. Dev.'],['#ffffbf','-0.5 - 0.5 Std. Dev.'],['#fab984','0.5 - 1.5 Std. Dev.'],['#ed7551','1.5 - 2.5 Std. Dev.'],['#d62f27','&gt; 2.5 Std. Dev.']].map(a=>pat(...a)),
lyr('leeds analysis',1),pat('#d3e5fa'),lyr('Leeds'),pat('#beffe8','','dk'),R(92,cell(32,svg('table',20))+'GWRproperty_crime_supp')].join('');

// ArcToolbox tree
const L1=(n,m,i='box')=>R(12,cell(21,tog(m?'':'plus'))+cell(33,svg(i,25))+n);
const L2=(n,m)=>R(41,cell(20,tog(m?'':'plus'))+cell(34,svg('toolset',25))+n);
const L3=(n,i='scroll')=>R(92,cell(31,svg(i,23))+n);
$('toolbox').innerHTML=[R(7,cell(31,svg('toolroot',24))+'ArcToolbox'),
...['3D Analyst','Analysis','Cartography','Conversion','Data Interoperability','Data Management','Editing','Geocoding','Geostatistical Analyst','Linear Referencing','Multidimension','Network Analyst','Parcel Fabric','Schematics','Server'].map(n=>L1(n+' Tools')),
L1('Space Time Pattern Mining Tools',0,'boxs'),L1('Spatial Analyst Tools'),L1('Spatial Statistics Tools',1),L2('Analyzing Patterns'),L2('Mapping Clusters'),L2('Measuring Geographic Distributions'),L2('Modeling Spatial Relationships',1),
L3('Exploratory Regression'),L3('Generate Network Spatial Weights'),L3('Generate Spatial Weights Matrix'),L3('<span class="hovered">Geographically Weighted Regression</span>','hammer'),L3('Ordinary Least Squares'),L2('Utilities'),L1('Tracking Analyst Tools')].join('');

$('rows').innerHTML=[['Bandwidth','5929.765384',''],['ResidualSquares','4449565.61196',''],['EffectiveNumber','13.11378',''],['Sigma','84.723291',''],['AICc','7424.578563',''],['R2','0.367055',''],['R2Adjusted','0.354686',''],['Dependent Field','0','property_c'],['Explanatory Field','1','hmos']]
.map((r,i)=>`<tr><td>${i?'':'<svg class="mx-auto" width="7" height="12"><path d="M0 0v12l7-6z"/></svg>'}</td><td class="text-end ${i?'':'cur'}">${i}</td><td>${r[0]}</td><td class="text-end">${r[1]}</td><td>${r[2]}</td></tr>`).join('');

$('task').innerHTML=['win','tsearch','tview','widgets','chat','explorer','firefox','chrome','brave','utor','zoom','arcmap','timer','photos'].map(n=>`<i class="tile ${n==='arcmap'?'cur':['firefox','chrome','utor','zoom','timer','photos'].includes(n)?'run':''}">${svg(n,24)}</i>`).join('');

// Residual map: district boundary in four survey sheets, fishnet lines and classified cells
const sheets=[
[1280,260,2.8,3,'598,1348 600,1325 593,1300 597,1260 605,1245 602,1215 608,1195 600,1175 611,1158 607,1130 620,1100 650,1078 658,1060 667,1020 657,1000 657,975 632,975 615,968 613,945 597,940 582,915 576,905 565,910 540,884 523,905 510,898 488,897 470,888 455,898 415,910 400,903 385,915 363,915 372,890 355,884 318,876 318,887 297,884 284,912 278,910 262,884 240,878 216,860 219,852 190,835 177,815 174,790 177,765 160,745 150,740 86,740 66,695 55,680 63,640 80,598 125,569 187,600 173,628 205,650 228,637 262,645 297,692 340,692 345,682 385,690 428,669 487,683 473,662 495,628 530,628 530,612 505,600 490,600 465,595 444,578 442,540 449,510 455,470 475,430 495,412 520,445 531,352 576,350 585,358 587,338 610,343 636,360 660,353 680,353 685,362 698,368 691,411 714,413 716,425 757,424 805,413 818,398 882,403 900,422 888,435 888,462 900,474 920,472 940,457 960,459 978,474 1045,480 1065,495 1080,495 1110,478 1135,458 1145,443 1175,434 1202,433 1198,442 1184,452 1190,475 1205,495 1240,508 1268,520 1282,512 1275,482 1285,435 1357,424 1375,416 1387,422 1396,450 1402,475 1412,492 1425,480 1441,480 1460,494 1477,496 1481,440 1488,417 1505,424 1550,424'],
[1800,260,2.8,3,'94,422 115,429 140,439 160,430 175,414 200,407 245,408 270,403 295,378 335,370 340,366 355,378 375,405 388,413 422,414 440,408 490,411 505,420 510,455 519,465 535,455 565,449 595,452 620,425 640,383 655,380 672,383 683,413 695,413 707,382 695,315 700,290 688,252 703,235 720,222 765,230 825,233 842,233 835,220 817,210 828,155 855,150 876,135 881,90 895,85 940,78 957,76 975,98 995,101 1020,99 1030,84 1045,75 1080,91 1113,90 1140,64 1165,56 1203,55 1217,43 1220,52 1206,70 1198,110 1203,100 1222,98 1240,115 1262,110 1285,127 1305,130 1320,142 1360,153 1408,158 1400,215 1397,267 1411,267 1418,236 1440,232 1445,214 1463,214 1480,237 1445,243 1425,257 1409,298 1440,288 1447,303 1463,290 1452,310 1443,370 1440,415 1447,437 1380,462 1328,483 1325,512 1350,545 1357,600 1350,605 1350,635 1338,638 1335,690 1362,705 1362,735 1342,738 1352,742 1357,790 1370,845 1388,862 1375,895 1355,908 1328,915 1275,917 1203,950 1165,962 1153,970 1190,995 1212,1023 1238,1020 1216,1085 1235,1100 1272,1132 1295,1127 1308,1140 1311,1190 1285,1187 1268,1195 1255,1208 1280,1230 1310,1255 1360,1300 1378,1313 1404,1315 1402,1348'],
[1900,660,3,3,'1200,148 1242,183 1220,210 1188,207 1180,250 1175,275 1177,320 1185,360 1195,398 1188,455 1196,475 1184,490 1184,548 1200,575 1230,595 1246,613 1230,630 1283,633 1300,660 1322,705 1328,740 1310,765 1290,775 1303,812 1268,809 1237,822 1210,805 1195,812 1192,870 1178,935 1208,928 1235,950 1260,956 1220,985 1195,963 1175,975 1150,1018 1128,1029 1095,1010 1070,1021 1025,1014 990,1033 920,1065 895,1060 850,1088 800,1085 780,1110 710,1138 685,1152 675,1190 655,1192 616,1168 580,1156 545,1166 521,1150 485,1172 455,1138 410,1107 337,1103 305,1110 165,1107 117,1110 110,1150 98,1168 62,1163 18,1138 33,1130 10,1115 8,1095'],
[1440,660,3,3,'1362,1090 1300,1158 1254,1200 1215,1245 1165,1270 1130,1305 1110,1335 1097,1375 1085,1372 1070,1408 1055,1408 1010,1350 975,1312 945,1300 940,1270 915,1240 880,1222 800,1195 775,1185 745,1184 710,1203 668,1210 660,1170 625,1120 612,1070 590,1015 587,965 572,940 575,910 505,921 458,930 410,905 345,860 312,818 360,762 415,740 425,710 485,714 520,665 558,645 558,577 416,577 390,582 345,570 302,510 265,522 170,543 123,543 150,505 150,475 128,455 150,400 185,343 155,325 145,265 150,235 147,205 155,165']];
const pts=sheets.flatMap(([x,y,a,b,s])=>s.split(' ').map(p=>{const[u,v]=p.split(',');return[(x+u/a).toFixed(1),(y+v/b).toFixed(1)].join()})).join(' ');
const X=[1298,1329.6,1361.3,1393,1423,1454.3,1485.7,1515.7,1547.1,1578.6,1608.6,1640.4,1671.8,1701.8,1733.2,1764.6,1794.6,1826.4,1857.9,1887.9,1919.3,1950.4,1980.7,2012.1,2043.6,2073.6,2105.4,2136.8,2166.8,2198.2,2229.6,2259.6,2291.4,2322.6,2354];
const Y=[274,305.7,337.3,367.3,398.7,430.3,460.3,491.7,523.3,553.3,584.7,616.3,646.3,677.7,709.3,739.3,770.7,802.3,832.3,863.7,895.3,925.3,956.7,988.3,1018.3,1049.7,1081.3,1111.3,1143];
const K={g:'#c0ccbe',o:'#fab984',r:'#ed7551',R:'#d62f27',b:'#849eba'};
const cells={1:[27,'o'],8:[6,'oo......ggggg'],9:[7,'o..g...gg....g'],10:[13,'og.....ggg'],11:[7,'gg.....g..o..g.gg'],12:[5,'ggg..o.rgggg.ogg.og'],13:[8,'gg...g.o.o.oooRog'],
14:[5,'ggg...ooobggoRrorrogg'],15:[5,'gg.oooR.gor.rRRoRro.g'],16:[7,'oro..oRroRRRror.o.g.o'],17:[7,'g..g...o.oRrg..gg'],18:[4,'ggggggggg.goRo.ggggggg'],19:[8,'ggggggrrRogggggg....o'],20:[7,'gggggg.R.g..gggg'],21:[6,'ggg.g...ggg.ogoo'],22:[7,'gggg..R.grrg.g'],23:[9,'ggg..ggg.ggggg'],24:[9,'ggggg....ggggg'],25:[9,'ggggggggggggggg'],26:[12,'ggggggggg'],27:[12,'ggggggggg']};
let h=`<clipPath id="leeds"><polygon points="${pts}"/></clipPath><g clip-path="url(#leeds)"><rect x="1290" y="260" width="1070" height="890" fill="#ffffbf"/>`;
for(const r in cells){const[c0,s]=cells[r];[...s].forEach((k,i)=>{if(K[k])h+=`<rect x="${X[c0+i]}" y="${Y[r]}" width="${(X[c0+i+1]-X[c0+i]).toFixed(1)}" height="${(Y[+r+1]-Y[r]).toFixed(1)}" fill="${K[k]}"/>`})}
h+=`<path d="${X.map(x=>`M${x} 260V1150`).join('')}${Y.map(y=>`M1290 ${y}H2360`).join('')}" stroke="#737373" stroke-width="1.700"/></g><polygon points="${pts}" fill="none" stroke="#6e6e6e" stroke-width="1.500" stroke-linejoin="round"/>`;
$('map').innerHTML=h;
</script>
<script src="https://cdn.jsdelivr.net/npm/bootstrap@5.3.0/dist/js/bootstrap.bundle.min.js"></script>
</body>
</html>
